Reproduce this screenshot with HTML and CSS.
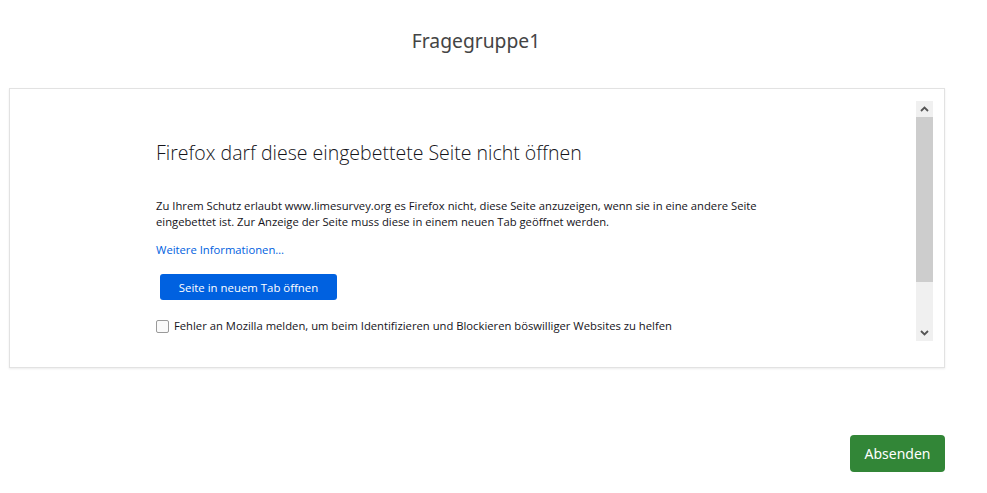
FILE: index.html
```html
<!DOCTYPE html>
<html lang="de">
<head>
<meta charset="utf-8">
<title>Fragegruppe1</title>
<link rel="stylesheet" href="styles.css">
</head>
<body>
<div class="page">
  <header class="group-head">
    <h1 class="group-title">Fragegruppe1</h1>
  </header>
  <section class="panel">
    <div class="frame">
      <div class="frame-content">
        <div class="error-box">
          <h2 class="error-title">Firefox darf diese eingebettete Seite nicht öffnen</h2>
          <p class="error-text">Zu Ihrem Schutz erlaubt www.limesurvey.org es Firefox nicht, diese Seite anzuzeigen, wenn sie in eine andere Seite eingebettet ist. Zur Anzeige der Seite muss diese in einem neuen Tab geöffnet werden.</p>
          <a class="error-link" href="#">Weitere Informationen…</a>
          <div class="btn-row"><button class="btn-open" type="button">Seite in neuem Tab öffnen</button></div>
          <label class="report"><span class="checkbox"></span><span>Fehler an Mozilla melden, um beim Identifizieren und Blockieren böswilliger Websites zu helfen</span></label>
        </div>
      </div>
      <div class="scrollbar">
        <div class="sb-btn">
          <svg width="9" height="6" viewBox="0 0 9 6"><path d="M1 5 L4.5 1.5 L8 5" fill="none" stroke="#555" stroke-width="1.8"/></svg>
        </div>
        <div class="sb-thumb"></div>
        <div class="sb-track"></div>
        <div class="sb-btn">
          <svg width="9" height="6" viewBox="0 0 9 6"><path d="M1 1 L4.5 4.5 L8 1" fill="none" stroke="#555" stroke-width="1.8"/></svg>
        </div>
      </div>
    </div>
  </section>
  <footer class="nav">
    <button class="btn-submit" type="button">Absenden</button>
  </footer>
</div>
</body>
</html>
```
FILE: styles.css
```css
* { box-sizing: border-box; }
html, body { margin: 0; padding: 0; background: #fff; }
body { font-family: "Noto Sans", "Open Sans", sans-serif; color: #333; }
.page { width: 987px; }
.group-head { height: 88px; display: flex; justify-content: center; padding-top: 27px; padding-right: 35px; }
.group-title { margin: 0; font-size: 19.3px; font-weight: 400; color: #444; line-height: 28px; }
.panel {
  margin-left: 9px; width: 936px; height: 280px;
  border: 1px solid #e2e2e2;
  box-shadow: 0 1px 2px rgba(0,0,0,0.08);
  padding: 12px 11px 26px 12px;
}
.frame { display: flex; height: 240px; }
.frame-content { flex: 1; padding-left: 134px; padding-top: 37px; overflow: hidden; }
.error-box { width: 640px; }
.error-title {
  margin: 0; font-family: "Open Sans", sans-serif; font-weight: 300;
  font-size: 19.5px; line-height: 30px; color: #15141a;
}
.error-text {
  margin: 30px 0 0 0; font-family: "Open Sans", sans-serif; font-size: 11.25px; line-height: 16px; color: #15141a;
}
.error-link {
  display: inline-block; margin-top: 12px; font-family: "Open Sans", sans-serif; font-size: 11.25px; line-height: 16px;
  color: #0061e0; text-decoration: none;
}
.btn-row { margin-top: 15px; padding-left: 4px; }
.btn-open {
  width: 177px; height: 26px; border: none; border-radius: 3px; background: #0061e0; color: #fff;
  font-family: "Open Sans", sans-serif; font-size: 11.4px; padding: 0;
}
.report {
  display: flex; align-items: center; gap: 5px; margin-top: 18px;
  font-family: "Open Sans", sans-serif; font-size: 11.25px; line-height: 16px; color: #15141a;
}
.checkbox { width: 13px; height: 13px; border: 1px solid #9a9a9a; border-radius: 2px; background: #fafafa; }
.scrollbar { width: 17px; display: flex; flex-direction: column; background: #f0f0f0; }
.sb-btn { height: 16px; display: flex; align-items: center; justify-content: center; }
.sb-thumb { height: 165px; background: #cdcdcd; }
.sb-track { flex: 1; }
.nav { display: flex; justify-content: flex-end; padding-right: 42px; margin-top: 67px; }
.btn-submit {
  width: 95px; height: 37px; border: none; border-radius: 4px; background: #328637; color: #fff;
  font-family: "Noto Sans", "Open Sans", sans-serif; font-size: 14px; padding: 0;
}
```
